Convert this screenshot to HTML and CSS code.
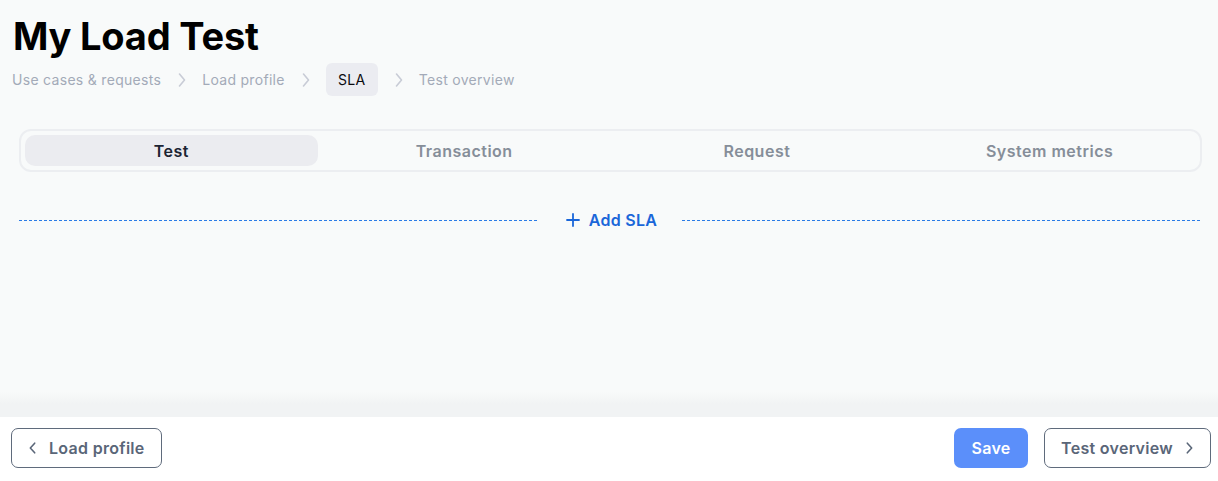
FILE: index.html
```html
<!DOCTYPE html>
<html>
<head>
<meta charset="utf-8">
<link rel="stylesheet" href="styles.css">
</head>
<body>
<div class="page">
  <main class="main">
    <h1 class="title">My Load Test</h1>
    <nav class="crumbs">
      <span class="crumb">Use cases &amp; requests</span>
      <svg class="chev" viewBox="0 0 8 16" width="8" height="16"><path d="M1.5 2l5 6-5 6" fill="none" stroke="#c8ccd6" stroke-width="1.6" stroke-linecap="round" stroke-linejoin="round"/></svg>
      <span class="crumb">Load profile</span>
      <svg class="chev" viewBox="0 0 8 16" width="8" height="16"><path d="M1.5 2l5 6-5 6" fill="none" stroke="#c8ccd6" stroke-width="1.6" stroke-linecap="round" stroke-linejoin="round"/></svg>
      <span class="crumb crumb-active">SLA</span>
      <svg class="chev" viewBox="0 0 8 16" width="8" height="16"><path d="M1.5 2l5 6-5 6" fill="none" stroke="#c8ccd6" stroke-width="1.6" stroke-linecap="round" stroke-linejoin="round"/></svg>
      <span class="crumb">Test overview</span>
    </nav>
    <div class="tabs">
      <div class="tab tab-active">Test</div>
      <div class="tab">Transaction</div>
      <div class="tab">Request</div>
      <div class="tab">System metrics</div>
    </div>
    <div class="add-row">
      <div class="dash"></div>
      <button class="add-btn">
        <svg viewBox="0 0 14 14" width="14" height="14"><path d="M7 1v12M1 7h12" stroke="#1a66d9" stroke-width="1.8" stroke-linecap="round"/></svg>
        <span>Add SLA</span>
      </button>
      <div class="dash"></div>
    </div>
  </main>
  <footer class="footer">
    <button class="btn btn-outline">
      <svg viewBox="0 0 10 16" width="9" height="14"><path d="M7.5 2.5L2.5 8l5 5.5" fill="none" stroke="#5a6678" stroke-width="1.8" stroke-linecap="round" stroke-linejoin="round"/></svg>
      <span>Load profile</span>
    </button>
    <div class="footer-right">
      <button class="btn btn-primary">Save</button>
      <button class="btn btn-outline">
        <span>Test overview</span>
        <svg viewBox="0 0 10 16" width="9" height="14"><path d="M2.5 2.5L7.5 8l-5 5.5" fill="none" stroke="#5a6678" stroke-width="1.8" stroke-linecap="round" stroke-linejoin="round"/></svg>
      </button>
    </div>
  </footer>
</div>
</body>
</html>
```

FILE: styles.css
```css
* { box-sizing: border-box; }
html, body { margin: 0; padding: 0; }
body {
  font-family: "Inter", "Noto Sans", sans-serif;
  background: #f8fafa;
  width: 1218px;
  height: 481px;
  overflow: hidden;
}
.page {
  height: 481px;
  display: flex;
  flex-direction: column;
}
.main {
  flex: 1;
  padding: 12px 16px 0 19px;
  background: linear-gradient(to bottom, #f8fafa 0, #f8fafa 392px, #f1f3f4 404px);
}
.title {
  margin: 0 0 0 -6px;
  font-size: 38px;
  font-weight: 700;
  color: #000;
  line-height: 48px;
  letter-spacing: -0.2px;
}
.crumbs {
  display: flex;
  align-items: center;
  margin: 3px 0 0 -7px;
  height: 33px;
}
.crumb {
  font-size: 14px;
  letter-spacing: 0.3px;
  color: #a3aab8;
}
.crumb-active {
  background: #ebecf1;
  color: #0b0b10;
  border-radius: 6px;
  height: 33px;
  line-height: 33px;
  padding: 0 12px;
  width: 52px;
  text-align: center;
}
.chev { margin: 0 16px 0 17px; }
.tabs {
  margin-top: 33px;
  display: grid;
  grid-template-columns: repeat(4, 1fr);
  border: 2px solid #eceef1;
  border-radius: 12px;
  padding: 4px;
  height: 43px;
  width: 1183px;
}
.tab {
  display: flex;
  align-items: center;
  justify-content: center;
  font-size: 16px;
  font-weight: 600;
  letter-spacing: 0.5px;
  color: #868e99;
  border-radius: 10px;
}
.tab-active {
  background: #ebecf0;
  color: #1c2433;
}
.add-row {
  margin-top: 36px;
  display: flex;
  align-items: center;
  width: 1183px;
  height: 24px;
}
.dash {
  flex: 1;
  height: 1px;
  background: repeating-linear-gradient(to right, #2a7be6 0 3px, transparent 3px 5px);
}
.add-btn {
  border: 0;
  background: none;
  display: flex;
  align-items: center;
  gap: 9px;
  padding: 0 25px 0 27px;
  font-family: inherit;
  font-size: 16px;
  font-weight: 600;
  letter-spacing: 0.3px;
  color: #1a66d9;
}
.footer {
  height: 64px;
  background: #fff;
  display: flex;
  align-items: center;
  justify-content: space-between;
  padding: 0 7px 2px 11px;
}
.footer-right {
  display: flex;
  gap: 16px;
}
.btn {
  font-family: inherit;
  height: 40px;
  border-radius: 7px;
  font-size: 16px;
  font-weight: 600;
  letter-spacing: 0.3px;
  display: flex;
  align-items: center;
  gap: 12px;
  cursor: pointer;
}
.btn-outline {
  background: #fff;
  border: 1px solid #5f6b7c;
  color: #5a6678;
  padding: 0 16px 0 16px;
}
.btn-primary {
  background: #5b8ffa;
  border: 0;
  color: #fff;
  width: 74px;
  padding: 0;
  justify-content: center;
}
```
